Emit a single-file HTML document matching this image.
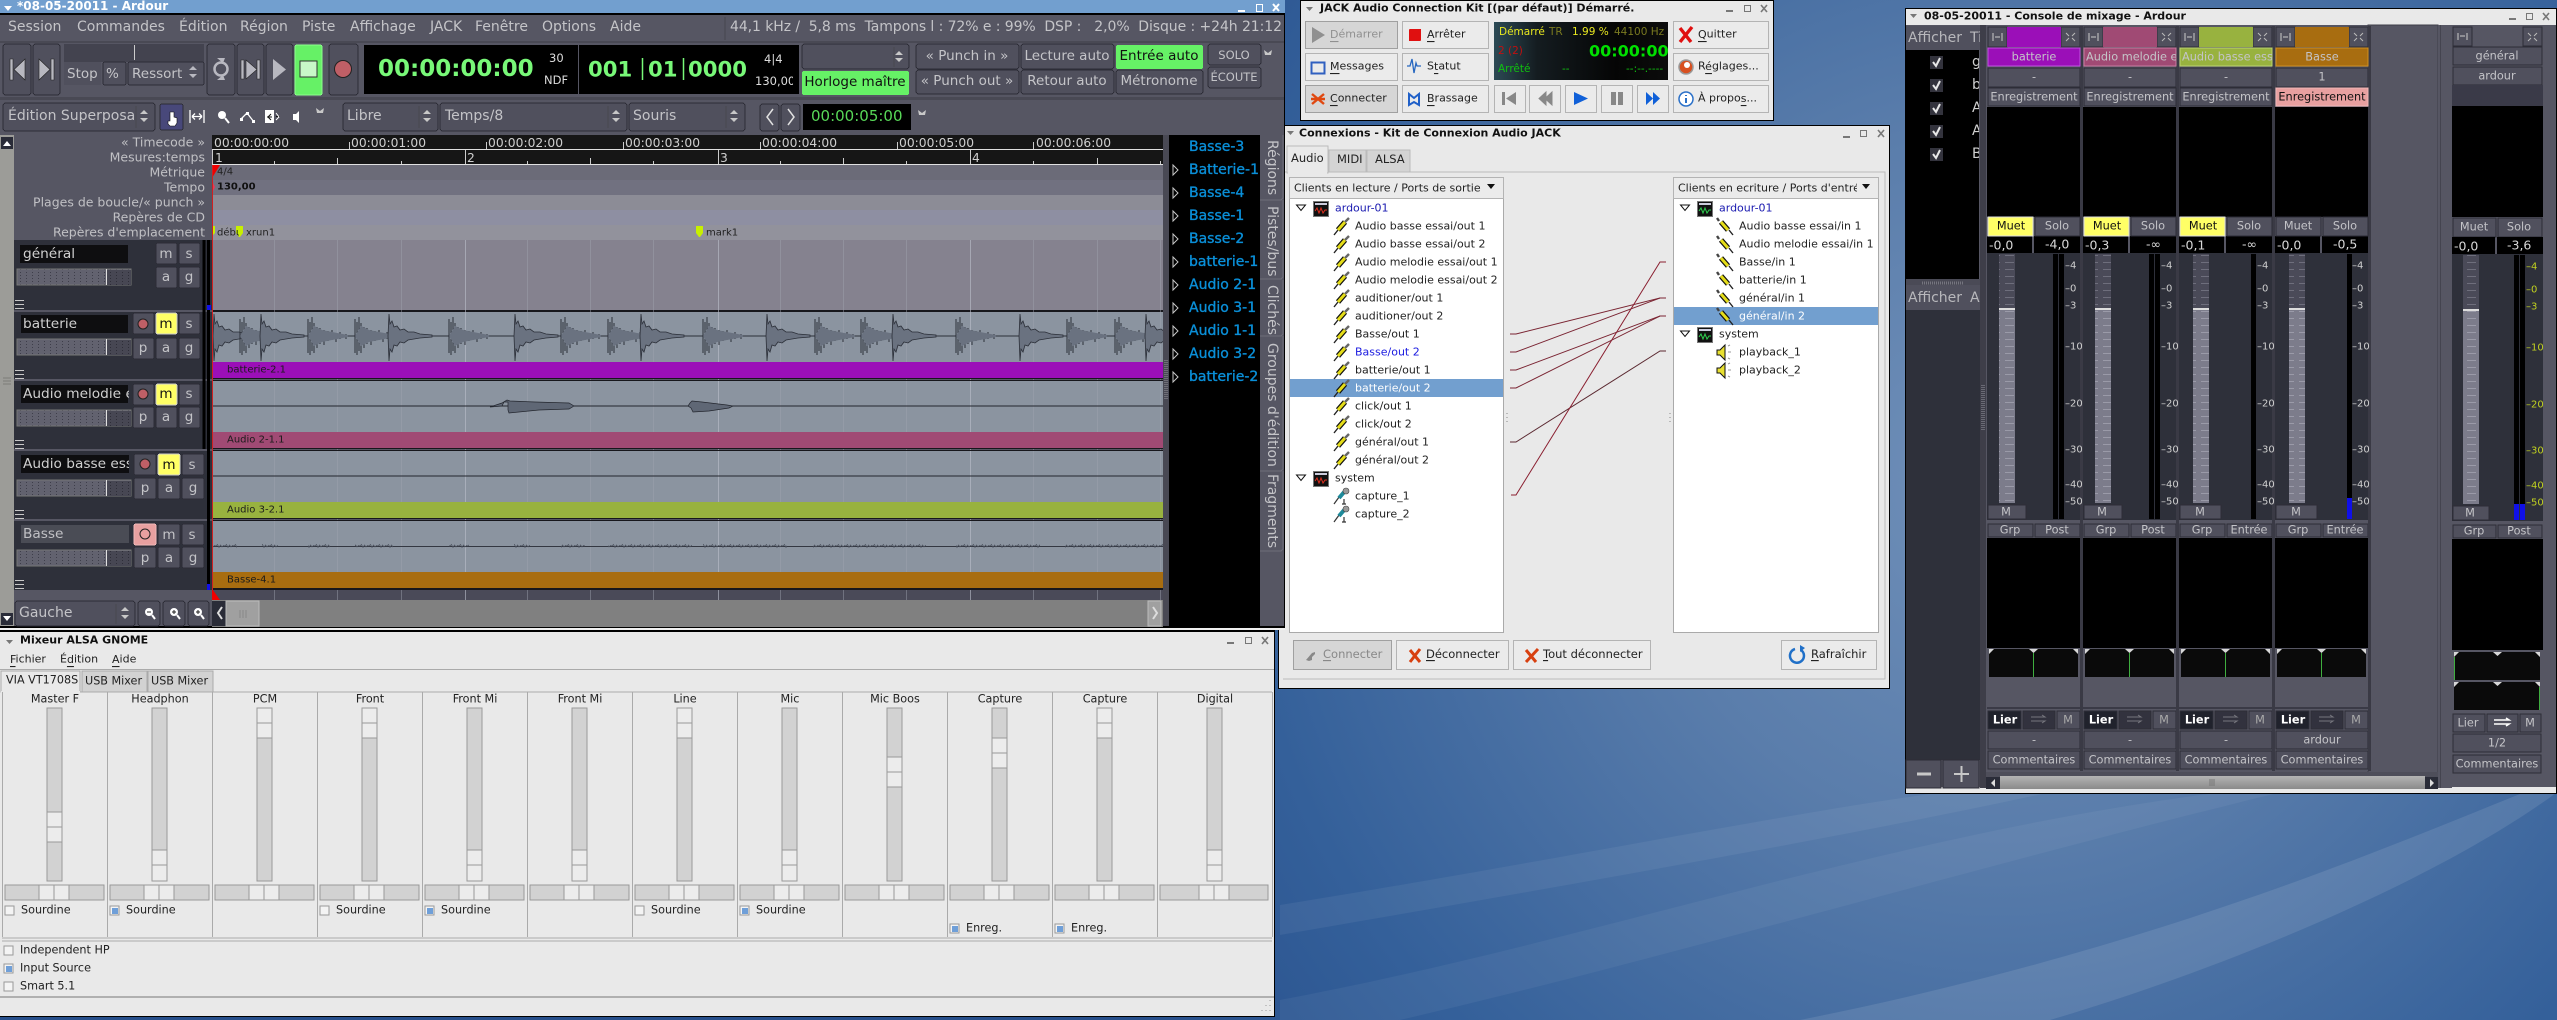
<!DOCTYPE html>
<html><head><meta charset="utf-8"><title>Ardour</title>
<style>
html,body{margin:0;padding:0;width:2557px;height:1020px;overflow:hidden;background:#3a6298}
svg{display:block}
text{font-family:"DejaVu Sans","Liberation Sans",sans-serif;dominant-baseline:central;white-space:pre}
rect{shape-rendering:crispEdges}
.m{text-anchor:middle}.e{text-anchor:end}
.b{fill:#50505d;stroke:#2d2d37}
.k{fill:#ebebeb;stroke:#b4b4b4}
.p{fill:#d6d6d6;stroke:#a0a0a0}
.tb{font-weight:bold;font-size:11px;fill:#111}
</style></head><body>
<svg xmlns="http://www.w3.org/2000/svg" width="2557" height="1020" viewBox="0 0 2557 1020">
<defs>
<radialGradient id="bg" gradientUnits="userSpaceOnUse" cx="2000" cy="480" r="1020"><stop offset="0" stop-color="#7090b9"/><stop offset=".35" stop-color="#5a7dab"/><stop offset=".75" stop-color="#34609a"/><stop offset="1" stop-color="#28508c"/></radialGradient>
<linearGradient id="thumb" x1="0" y1="0" x2="0" y2="1"><stop offset="0" stop-color="#b4b4b4"/><stop offset="1" stop-color="#8a8a8a"/></linearGradient>
<linearGradient id="lcd" x1="0" y1="0" x2="1" y2="0"><stop offset="0" stop-color="#2c4a55"/><stop offset=".25" stop-color="#141c20"/><stop offset=".7" stop-color="#050505"/><stop offset="1" stop-color="#0c0c0c"/></linearGradient>
<pattern id="dots" width="6" height="6" patternUnits="userSpaceOnUse"><rect width="6" height="6" fill="#62626f"/><rect x="2" y="2" width="1" height="1" fill="#3e3e4a"/><rect x="2" y="5" width="1" height="1" fill="#3e3e4a"/></pattern>
<pattern id="dots2" width="6" height="6" patternUnits="userSpaceOnUse"><rect width="6" height="6" fill="#474753"/><rect x="2" y="2" width="1" height="1" fill="#2e2e38"/><rect x="2" y="5" width="1" height="1" fill="#2e2e38"/></pattern>
<pattern id="fd" width="14" height="7" patternUnits="userSpaceOnUse"><rect width="14" height="7" fill="#4a4a58"/><rect x="3" y="3" width="9" height="1" fill="#6e6e7c"/></pattern>
<pattern id="fl" width="14" height="7" patternUnits="userSpaceOnUse"><rect width="14" height="7" fill="#7c7c8b"/><rect x="3" y="3" width="9" height="1" fill="#9a9aa8"/></pattern>
<pattern id="zig" x="0" y="543" width="9" height="6" patternUnits="userSpaceOnUse"><path d="M0,3L1.500,1.500L3,4.500L4.500,2L6,4L7.500,2.500L9,3" fill="none" stroke="#4a505c" stroke-width=".7"/></pattern>

<g id="kick"><path d="M0,0L1,-22L2,-12L4,-15L6,-9L9,-10L12,-6L16,-7L20,-4L26,-4L32,-2L44,-1L44,1L32,2L26,3L20,4L16,7L12,6L9,10L6,9L4,16L2,13L1,25Z" fill="#6a7280" stroke="#2b2f38" stroke-width=".8"/></g>
<g id="snare"><path d="M0,-17V17M2,-14V19M4,-19V15M6,-13V17M9,-9V12M12,-8V8M16,-6V9M20,-5V5M24,-6V4M28,-3V6M32,-4V3M38,-2V3" stroke="#2b2f38" stroke-width="1" fill="none"/><path d="M0,0L6,-10L14,-6L24,-4L40,-1L40,1L24,4L14,6L6,10Z" fill="#6a7280"/></g>

<g id="grip"><path d="M0,.5h9M0,4.5h9M0,8.5h9" stroke="#c8c8c8" fill="none"/></g>

<g id="pl"><path d="M0,17L4,12" stroke="#222" stroke-width="1.400"/><path d="M4,12L11,4" stroke="#111" stroke-width="5.500"/><path d="M4,12L11,4" stroke="#e4dc18" stroke-width="3"/><path d="M11,4L15,0" stroke="#666" stroke-width="2.400"/></g>
<g id="pr"><path d="M16,17L12,12" stroke="#222" stroke-width="1.400"/><path d="M11,12L4,4" stroke="#111" stroke-width="5.500"/><path d="M11,12L4,4" stroke="#e4dc18" stroke-width="3"/><path d="M2,3L0,0" stroke="#444" stroke-width="2.400"/></g>
<g id="mic"><path d="M0,16L8,5" stroke="#333" stroke-width="1.200"/><path d="M5,10L11,3" stroke="#1e8a9a" stroke-width="4"/><circle cx="12" cy="3" r="3" fill="#9a9a9a" stroke="#444" stroke-width=".6"/><path d="M10,11v5M8,16h4" stroke="#333" stroke-width="1.200"/></g>
<g id="spk"><path d="M0,6h3l5,-5v15l-5,-5h-3z" fill="#e8e030" stroke="#111"/><path d="M11,2l2,-1M11,8h3M11,14l2,1" stroke="#999" fill="none"/></g>
<g id="tr"><rect x=".5" y=".5" width="15" height="15" fill="#111" stroke="#777"/><rect x="2" y="2" width="12" height="2" fill="#ccd"/><path d="M2,10l2,-3l2,5l2,-5l2,5l2,-3h2" stroke="#e03020" fill="none"/></g>
<g id="tg"><rect x=".5" y=".5" width="15" height="15" fill="#111" stroke="#777"/><rect x="2" y="2" width="12" height="2" fill="#ccd"/><path d="M2,10l2,-3l2,5l2,-5l2,5l2,-3h2" stroke="#30d050" fill="none"/></g>
<path id="tri" d="M0,0h9l-4.500,5.500z" fill="#fff" stroke="#111"/>

<g id="strip">
<rect x="1987" y="26" width="93" height="745" fill="#565663"/>
<rect x="1987" y="253" width="93" height="267" fill="#2e303a"/>
<rect class="b" x="1988" y="27" width="19" height="20"/><rect class="b" x="2061" y="27" width="19" height="20"/>
<path d="M1993,33v8M2002,33v8M1995,37h5" stroke="#ccc" fill="none"/><path d="M2066,33l3,3M2075,33l-3,3M2066,41l3,-3M2075,41l-3,-3" stroke="#bbb" fill="none"/>
<rect class="b" x="1988" y="68" width="92" height="19"/>
<rect x="1987" y="107" width="93" height="110" fill="#000"/>
<rect class="b" x="1988" y="524" width="45" height="13"/><rect class="b" x="2035" y="524" width="45" height="13"/>
<rect x="1987" y="538" width="93" height="110" fill="#000"/>
<rect x="1989" y="649" width="89" height="28" fill="#0a0a0a"/>
<path d="M1989,649h5l-5,5zM2078,649h-5l5,5zM2029,649h9l-4.500,4z" fill="#d8d8d8"/>
<path d="M2033.500,653V677" stroke="#3fae3f"/>
<rect x="1987" y="707" width="93" height="2" fill="#3a3a46"/>
<rect x="1988" y="711" width="33" height="18" fill="#20222c" stroke="#2d2d37"/><rect x="2023" y="711" width="32" height="18" fill="#32323e" stroke="#2d2d37"/><rect class="b" x="2057" y="711" width="23" height="18"/>
<path d="M2031,717h14l-3,-2M2031,721h14l-3,2" stroke="#77777f" fill="none"/>
<rect class="b" x="1988" y="731" width="92" height="18"/>
<rect class="b" x="1988" y="751" width="92" height="18"/>
<rect x="2080" y="26" width="3" height="745" fill="#3a3a45"/>
<rect x="1987" y="236" width="45" height="17" fill="#000"/><rect x="2034" y="236" width="46" height="17" fill="#000"/>
</g>
</defs>

<!-- desktop -->
<rect width="2557" height="1020" fill="url(#bg)"/>
<path d="M1280,905C1560,860 1800,810 1960,790L2060,790C1880,830 1600,880 1280,935Z" fill="#fff" opacity=".06"/>
<path d="M1280,1000C1600,940 1900,830 2240,790L2290,790C2000,860 1660,960 1400,1020H1280Z" fill="#fff" opacity=".05"/>
<path d="M1800,1020C2150,950 2380,850 2530,790H2560C2440,880 2220,970 2050,1020Z" fill="#fff" opacity=".1"/>

<!-- Connexions window -->
<rect x="1278.500" y="125.500" width="611" height="563" fill="#e9e9e9" stroke="#000"/>
<path d="M1287,131h7l-3.500,4z" fill="#777"/>
<text class="tb" x="1299" y="133">Connexions - Kit de Connexion Audio JACK</text>
<g stroke="#777" fill="none"><path d="M1843,137h7" stroke-width="2"/><rect x="1860.500" y="130.500" width="6" height="6"/><path d="M1878,130l6,7M1884,130l-6,7" stroke-width="1.600"/></g>
<path d="M1283,172H1885V679H1283" fill="none" stroke="#bbb"/>
<rect x="1329" y="150" width="37" height="22" fill="#d4d4d4" stroke="#bbb"/><rect x="1367" y="150" width="43" height="22" fill="#d4d4d4" stroke="#bbb"/>
<rect x="1287" y="146" width="41" height="27" fill="#e9e9e9" stroke="#bbb"/><rect x="1288" y="171" width="39" height="3" fill="#e9e9e9"/>
<g font-size="11.500" fill="#222"><text x="1291" y="158">Audio</text><text x="1337" y="159">MIDI</text><text x="1375" y="159">ALSA</text></g>
<rect x="1289.500" y="198.500" width="214" height="434" fill="#fff" stroke="#aaa"/>
<rect x="1673.500" y="198.500" width="205" height="434" fill="#fff" stroke="#aaa"/>
<rect class="k" x="1289.500" y="177.500" width="214" height="21"/><rect class="k" x="1673.500" y="177.500" width="205" height="21"/>
<path d="M1487,184h8l-4,5zM1862,184h8l-4,5z" fill="#111"/>
<g font-size="11" fill="#222">
<text x="1294" y="188">Clients en lecture / Ports de sortie</text>
<svg x="1677" y="177" width="180" height="22" overflow="hidden"><text x="1" y="11">Clients en ecriture / Ports d'entrée</text></svg>
</g>
<rect x="1290" y="379" width="213" height="18" fill="#729fcf"/>
<rect x="1674" y="307" width="204" height="18" fill="#729fcf"/>
<g font-size="11" fill="#222">
<use href="#tri" x="1296.500" y="205"/><use href="#tr" x="1313" y="201"/><text x="1335" y="208" fill="#1a1ab0">ardour-01</text>
<text x="1355" y="226">Audio basse essai/out 1</text>
<text x="1355" y="244">Audio basse essai/out 2</text>
<text x="1355" y="262">Audio melodie essai/out 1</text>
<text x="1355" y="280">Audio melodie essai/out 2</text>
<text x="1355" y="298">auditioner/out 1</text>
<text x="1355" y="316">auditioner/out 2</text>
<text x="1355" y="334">Basse/out 1</text>
<text x="1355" y="352" fill="#1a1ae0">Basse/out 2</text>
<text x="1355" y="370">batterie/out 1</text>
<text x="1355" y="388" fill="#fff">batterie/out 2</text>
<text x="1355" y="406">click/out 1</text>
<text x="1355" y="424">click/out 2</text>
<text x="1355" y="442">général/out 1</text>
<text x="1355" y="460">général/out 2</text>
<use href="#tri" x="1296.500" y="475"/><use href="#tr" x="1313" y="471"/><text x="1335" y="478">system</text>
<text x="1355" y="496">capture_1</text>
<text x="1355" y="514">capture_2</text>
<use href="#tri" x="1680.500" y="205"/><use href="#tg" x="1697" y="201"/><text x="1719" y="208" fill="#1a1ab0">ardour-01</text>
<text x="1739" y="226">Audio basse essai/in 1</text>
<text x="1739" y="244">Audio melodie essai/in 1</text>
<text x="1739" y="262">Basse/in 1</text>
<text x="1739" y="280">batterie/in 1</text>
<text x="1739" y="298">général/in 1</text>
<text x="1739" y="316" fill="#fff">général/in 2</text>
<use href="#tri" x="1680.500" y="331"/><use href="#tg" x="1697" y="327"/><text x="1719" y="334">system</text>
<text x="1739" y="352">playback_1</text>
<text x="1739" y="370">playback_2</text>
</g>
<use href="#pl" x="1334" y="218"/><use href="#pl" x="1334" y="236"/><use href="#pl" x="1334" y="254"/><use href="#pl" x="1334" y="272"/><use href="#pl" x="1334" y="290"/><use href="#pl" x="1334" y="308"/><use href="#pl" x="1334" y="326"/><use href="#pl" x="1334" y="344"/><use href="#pl" x="1334" y="362"/><use href="#pl" x="1334" y="380"/><use href="#pl" x="1334" y="398"/><use href="#pl" x="1334" y="416"/><use href="#pl" x="1334" y="434"/><use href="#pl" x="1334" y="452"/>
<use href="#mic" x="1334" y="488"/><use href="#mic" x="1334" y="506"/>
<use href="#pr" x="1717" y="218"/><use href="#pr" x="1717" y="236"/><use href="#pr" x="1717" y="254"/><use href="#pr" x="1717" y="272"/><use href="#pr" x="1717" y="290"/><use href="#pr" x="1717" y="308"/>
<use href="#spk" x="1717" y="344"/><use href="#spk" x="1717" y="362"/>
<g fill="none" stroke="#7a2432" stroke-width="1">
<path d="M1510,334h6L1660,298h6"/><path d="M1510,352h6L1660,298h6"/><path d="M1510,370h6L1660,316h6"/><path d="M1510,388h6L1660,316h6"/>
<path d="M1510,442h6L1660,351h6" stroke="#5a2830"/><path d="M1511,495h5L1660,262h6" stroke="#8a1f30"/>
</g>
<path d="M1507,413v1M1507,417v1M1507,421v1M1670,413v1M1670,417v1M1670,421v1" stroke="#888" fill="none"/>
<rect class="p" x="1293.500" y="640.500" width="98" height="29"/><rect class="k" x="1396.500" y="640.500" width="112" height="29"/><rect class="k" x="1513.500" y="640.500" width="137" height="29"/><rect class="k" x="1781.500" y="640.500" width="95" height="29"/>
<g font-size="11.500" fill="#222">
<path d="M1306,660l6,-7l3,-1v2l-3,3v3l-3,1z" fill="#888"/>
<text x="1323" y="654" fill="#888"><tspan text-decoration="underline">C</tspan>onnecter</text>
<path d="M1410,650l10,12M1420,649l-10,13" stroke="#d84010" stroke-width="3"/>
<text x="1426" y="654"><tspan text-decoration="underline">D</tspan>éconnecter</text>
<path d="M1526,650l10,12M1538,649l-12,13" stroke="#d84010" stroke-width="3"/>
<text x="1543" y="654"><tspan text-decoration="underline">T</tspan>out déconnecter</text>
<path d="M1795,649a7,7 0 1 0 6,1" stroke="#2070c8" stroke-width="2.500" fill="none"/><path d="M1800,645v7l5,-4z" fill="#2070c8"/>
<text x="1811" y="654"><tspan text-decoration="underline">R</tspan>afraîchir</text>
</g>

<!-- JACK window -->
<rect x="1300.500" y=".5" width="473" height="120" fill="#e9e9e9" stroke="#000"/>
<path d="M1306,7h7l-3.500,4z" fill="#777"/>
<text class="tb" x="1320" y="8">JACK Audio Connection Kit [(par défaut)] Démarré.</text>
<g stroke="#777" fill="none"><path d="M1726,11h7" stroke-width="2"/><rect x="1744.500" y="5.500" width="6" height="6"/><path d="M1761,5l6,7M1767,5l-6,7" stroke-width="1.600"/></g>
<rect class="p" x="1305.500" y="21.500" width="92" height="27"/><rect class="k" x="1402.500" y="21.500" width="86" height="27"/>
<rect class="k" x="1305.500" y="53.500" width="92" height="27"/><rect class="k" x="1402.500" y="53.500" width="86" height="27"/>
<rect class="p" x="1305.500" y="85.500" width="92" height="27"/><rect class="k" x="1402.500" y="85.500" width="86" height="27"/>
<rect class="k" x="1494.500" y="85.500" width="31" height="27"/><rect class="k" x="1529.500" y="85.500" width="31" height="27"/><rect class="k" x="1565.500" y="85.500" width="31" height="27"/><rect class="k" x="1601.500" y="85.500" width="31" height="27"/><rect class="k" x="1637.500" y="85.500" width="31" height="27"/>
<rect class="k" x="1673.500" y="21.500" width="95" height="27"/><rect class="k" x="1673.500" y="53.500" width="95" height="27"/><rect class="k" x="1673.500" y="85.500" width="95" height="27"/>
<path d="M1312,27l13,8l-13,8z" fill="#909090"/>
<rect x="1409" y="29" width="12" height="12" rx="1" fill="#e01010"/>
<rect x="1311.500" y="62.500" width="13" height="11" fill="none" stroke="#3060c0" stroke-width="2"/>
<path d="M1407,66h3l2,-7l2,14l2,-10l1,3h4" fill="none" stroke="#2868c0" stroke-width="1.300"/>
<path d="M1312,94l12,10M1324,94l-12,10M1311,99h14" stroke="#e04810" stroke-width="2.400" fill="none"/>
<path d="M1409,94v11l5,-3l5,3v-11l-5,4z" fill="none" stroke="#2060c8" stroke-width="2"/>
<path d="M1680,28l11,14M1692,27l-12,15" stroke="#e01010" stroke-width="3.400"/>
<circle cx="1686" cy="67" r="7" fill="#d85020" stroke="#999" stroke-width="1.500"/><circle cx="1687" cy="65" r="3" fill="#fff"/>
<circle cx="1686" cy="99" r="7" fill="#fff" stroke="#2a70c8" stroke-width="1.500"/><path d="M1686,95v1M1686,98v5" stroke="#2a70c8" stroke-width="2"/>
<path d="M1502,92h3v13h-3zM1516,92v13l-10,-6.500z" fill="#888"/>
<path d="M1552,92v13l-7,-6.500zM1546,92v13l-7,-6.500z" fill="#888" stroke="#888"/>
<path d="M1574,92l14,6.500l-14,6.500z" fill="#1060d8"/>
<path d="M1611,92h5v13h-5zM1618,92h5v13h-5z" fill="#888"/>
<path d="M1646,92l7,6.500l-7,6.500zM1653,92l7,6.500l-7,6.500z" fill="#1060d8"/>
<g font-size="11" fill="#222">
<text x="1330" y="34" fill="#909090"><tspan text-decoration="underline">D</tspan>émarrer</text>
<text x="1427" y="34"><tspan text-decoration="underline">A</tspan>rrêter</text>
<text x="1330" y="66"><tspan text-decoration="underline">M</tspan>essages</text>
<text x="1427" y="66">S<tspan text-decoration="underline">t</tspan>atut</text>
<text x="1330" y="98"><tspan text-decoration="underline">C</tspan>onnecter</text>
<text x="1427" y="98"><tspan text-decoration="underline">B</tspan>rassage</text>
<text x="1698" y="34"><tspan text-decoration="underline">Q</tspan>uitter</text>
<text x="1698" y="66">R<tspan text-decoration="underline">é</tspan>glages...</text>
<text x="1698" y="98">À propo<tspan text-decoration="underline">s</tspan>...</text>
</g>
<rect x="1494" y="22" width="174" height="58" fill="url(#lcd)"/>
<g font-size="10.500">
<text x="1499" y="32" fill="#e8e820">Démarré</text><text x="1549" y="32" fill="#7a7a20">TR</text><text x="1572" y="32" fill="#e8e820">1.99 %</text><text x="1614" y="32" fill="#7a7a20">44100 Hz</text>
<text x="1498" y="51" fill="#c01010">2 (2)</text>
<text x="1589" y="51" fill="#00e000" font-size="16" font-weight="bold">00:00:00</text>
<text x="1498" y="69" fill="#10c010">Arrêté</text><text x="1562" y="69" fill="#10c010">--</text><text x="1626" y="69" fill="#10c010">--:--.----</text>
</g>

<!-- Mixer window -->
<rect x="1905.500" y="8.500" width="651" height="785" fill="#e9e9e9" stroke="#000"/>
<path d="M1910,14h7l-3.500,4z" fill="#777"/>
<text class="tb" x="1924" y="16">08-05-20011 - Console de mixage - Ardour</text>
<g stroke="#777" fill="none"><path d="M2509,19h7" stroke-width="2"/><rect x="2526.500" y="13.500" width="6" height="6"/><path d="M2543,13l6,7M2549,13l-6,7" stroke-width="1.600"/></g>
<rect x="1906" y="25" width="650" height="762" fill="#565663"/>
<rect x="1906" y="26" width="74" height="24" fill="#50505d"/>
<rect x="1906" y="50" width="73" height="229" fill="#000"/>
<rect x="1906" y="279" width="74" height="6" fill="#4a4a56"/>
<path d="M1922,283h42" stroke="#75757f" stroke-width="3" stroke-dasharray="1 1"/>
<rect x="1906" y="285" width="74" height="25" fill="#50505d"/>
<rect x="1906" y="310" width="74" height="450" fill="#2e303a"/>
<svg x="1906" y="26" width="74" height="24"><text x="2" y="12" font-size="14" fill="#b8b8bc">Afficher</text><text x="64" y="12" font-size="14" fill="#b8b8bc">Ti</text></svg>
<svg x="1906" y="285" width="74" height="25"><text x="2" y="13" font-size="14" fill="#b8b8bc">Afficher</text><text x="64" y="13" font-size="14" fill="#b8b8bc">A</text></svg>
<g fill="#33333d"><rect x="1930" y="56" width="13" height="13"/><rect x="1930" y="79" width="13" height="13"/><rect x="1930" y="102" width="13" height="13"/><rect x="1930" y="125" width="13" height="13"/><rect x="1930" y="148" width="13" height="13"/></g>
<g fill="none" stroke="#e8e8e8" stroke-width="2"><path d="M1933,62l3,4l4,-8"/><path d="M1933,85l3,4l4,-8"/><path d="M1933,108l3,4l4,-8"/><path d="M1933,131l3,4l4,-8"/><path d="M1933,154l3,4l4,-8"/></g>
<svg x="1970" y="50" width="9" height="120"><g font-size="14" fill="#d0d0d0"><text x="2" y="12">g</text><text x="2" y="35">b</text><text x="2" y="58">A</text><text x="2" y="81">A</text><text x="2" y="104">B</text></g></svg>
<rect class="b" x="1906" y="760" width="35" height="28"/><rect class="b" x="1943" y="760" width="36" height="28"/>
<path d="M1917,774h14" stroke="#c8c8c8" stroke-width="3"/><path d="M1954,774h15M1961.500,766v16" stroke="#c8c8c8" stroke-width="2"/>
<rect x="1980" y="25" width="6" height="763" fill="#3e3e49"/>
<path d="M1983,385v45" stroke="#6a6a75" stroke-width="4" stroke-dasharray="1 1"/>
<rect x="2368" y="25" width="70" height="748" fill="#565663" stroke="#3e3e49"/>
<rect x="2438" y="25" width="14" height="763" fill="#565663"/>
<rect x="2440" y="25" width="1" height="763" fill="#44444f"/>

<use href="#strip"/><use href="#strip" x="96"/><use href="#strip" x="192"/><use href="#strip" x="288"/>

<!-- strip colour -->
<rect x="2007" y="27" width="54" height="20" fill="#9b0fb8"/><rect x="2103" y="27" width="54" height="20" fill="#a04a74"/><rect x="2199" y="27" width="54" height="20" fill="#98b23f"/><rect x="2295" y="27" width="54" height="20" fill="#a86d10"/>
<rect x="1988" y="48" width="92" height="18" fill="#9b0fb8" stroke="#c050e0"/><rect x="2084" y="48" width="92" height="18" fill="#a04a74" stroke="#c87aa0"/><rect x="2180" y="48" width="92" height="18" fill="#98b23f" stroke="#bcd470"/><rect x="2276" y="48" width="92" height="18" fill="#a86d10" stroke="#d09020"/>
<rect class="b" x="1988" y="88" width="92" height="18"/><rect class="b" x="2084" y="88" width="92" height="18"/><rect class="b" x="2180" y="88" width="92" height="18"/><rect x="2276" y="88" width="92" height="18" fill="#e8a0a0" stroke="#f0b8b8"/>
<rect x="1988" y="217" width="45" height="19" fill="#ffff66" stroke="#ddd"/><rect class="b" x="2035" y="217" width="45" height="19"/>
<rect x="2084" y="217" width="45" height="19" fill="#ffff66" stroke="#ddd"/><rect class="b" x="2131" y="217" width="45" height="19"/>
<rect x="2180" y="217" width="45" height="19" fill="#ffff66" stroke="#ddd"/><rect class="b" x="2227" y="217" width="45" height="19"/>
<rect class="b" x="2276" y="217" width="45" height="19"/><rect class="b" x="2323" y="217" width="45" height="19"/>
<!-- faders -->
<rect x="1999" y="254" width="16" height="54" fill="url(#fd)"/><rect x="1999" y="308" width="16" height="195" fill="url(#fl)"/><rect x="1999" y="308" width="16" height="2" fill="#ddd"/>
<rect x="2095" y="254" width="16" height="54" fill="url(#fd)"/><rect x="2095" y="308" width="16" height="195" fill="url(#fl)"/><rect x="2095" y="308" width="16" height="2" fill="#ddd"/>
<rect x="2193" y="254" width="16" height="54" fill="url(#fd)"/><rect x="2193" y="308" width="16" height="195" fill="url(#fl)"/><rect x="2193" y="308" width="16" height="2" fill="#ddd"/>
<rect x="2289" y="254" width="16" height="54" fill="url(#fd)"/><rect x="2289" y="308" width="16" height="195" fill="url(#fl)"/><rect x="2289" y="308" width="16" height="2" fill="#ddd"/>
<rect class="b" x="1988" y="505" width="38" height="14"/><rect class="b" x="2084" y="505" width="38" height="14"/><rect class="b" x="2180" y="505" width="41" height="14"/><rect class="b" x="2276" y="505" width="41" height="14"/>
<!-- meters -->
<rect x="2053" y="254" width="5" height="265" fill="#000"/><rect x="2059" y="254" width="5" height="265" fill="#000"/>
<rect x="2149" y="254" width="5" height="265" fill="#000"/><rect x="2155" y="254" width="5" height="265" fill="#000"/>
<rect x="2251" y="254" width="5" height="265" fill="#000"/>
<rect x="2347" y="254" width="5" height="244" fill="#000"/><rect x="2347" y="498" width="5" height="21" fill="#1010e8"/>

<!-- strip texts -->
<g font-size="11.300" fill="#c4c4c8" class="m">
<text x="2034" y="57">batterie</text>
<svg x="2084" y="48" width="92" height="18"><text x="2" y="9" style="text-anchor:start">Audio melodie essai</text></svg>
<svg x="2180" y="48" width="92" height="18"><text x="2" y="9" style="text-anchor:start">Audio basse essai</text></svg>
<text x="2322" y="57">Basse</text>
<text x="2034" y="77">-</text><text x="2130" y="77">-</text><text x="2226" y="77">-</text><text x="2322" y="77">1</text>
<text x="2034" y="97">Enregistrement</text><text x="2130" y="97">Enregistrement</text><text x="2226" y="97">Enregistrement</text><text x="2322" y="97" fill="#111">Enregistrement</text>
<text x="2011" y="226" fill="#111">Muet</text><text x="2057" y="226">Solo</text>
<text x="2107" y="226" fill="#111">Muet</text><text x="2153" y="226">Solo</text>
<text x="2203" y="226" fill="#111">Muet</text><text x="2249" y="226">Solo</text>
<text x="2298" y="226">Muet</text><text x="2345" y="226">Solo</text>
<text x="2006" y="512">M</text><text x="2102" y="512">M</text><text x="2200" y="512">M</text><text x="2296" y="512">M</text>
<text x="2010" y="530">Grp</text><text x="2057" y="530">Post</text>
<text x="2106" y="530">Grp</text><text x="2153" y="530">Post</text>
<text x="2202" y="530">Grp</text><text x="2249" y="530">Entrée</text>
<text x="2298" y="530">Grp</text><text x="2345" y="530">Entrée</text>
<text x="2005" y="720" fill="#fff" font-weight="bold">Lier</text><text x="2101" y="720" fill="#fff" font-weight="bold">Lier</text><text x="2197" y="720" fill="#fff" font-weight="bold">Lier</text><text x="2293" y="720" fill="#fff" font-weight="bold">Lier</text>
<text x="2068" y="720" fill="#aaa">M</text><text x="2164" y="720" fill="#aaa">M</text><text x="2260" y="720" fill="#aaa">M</text><text x="2356" y="720" fill="#aaa">M</text>
<text x="2034" y="740">-</text><text x="2130" y="740">-</text><text x="2226" y="740">-</text><text x="2322" y="740">ardour</text>
<text x="2034" y="760">Commentaires</text><text x="2130" y="760">Commentaires</text><text x="2226" y="760">Commentaires</text><text x="2322" y="760">Commentaires</text>
</g>
<g font-size="12.500" fill="#d8d8d8">
<text x="1989" y="245">-0,0</text><text x="2045" y="244">-4,0</text>
<text x="2085" y="245">-0,3</text><text x="2146" y="244">-∞</text>
<text x="2181" y="245">-0,1</text><text x="2242" y="244">-∞</text>
<text x="2277" y="245">-0,0</text><text x="2333" y="244">-0,5</text>
</g>
<g font-size="10" fill="#cfcfcf">
<text x="2065" y="266">–4</text><text x="2065" y="289">–0</text><text x="2065" y="306">–3</text><text x="2065" y="347">–10</text><text x="2065" y="404">–20</text><text x="2065" y="450">–30</text><text x="2065" y="485">–40</text><text x="2065" y="502">–50</text>
<text x="2161" y="266">–4</text><text x="2161" y="289">–0</text><text x="2161" y="306">–3</text><text x="2161" y="347">–10</text><text x="2161" y="404">–20</text><text x="2161" y="450">–30</text><text x="2161" y="485">–40</text><text x="2161" y="502">–50</text>
<text x="2257" y="266">–4</text><text x="2257" y="289">–0</text><text x="2257" y="306">–3</text><text x="2257" y="347">–10</text><text x="2257" y="404">–20</text><text x="2257" y="450">–30</text><text x="2257" y="485">–40</text><text x="2257" y="502">–50</text>
<text x="2352" y="266">–4</text><text x="2352" y="289">–0</text><text x="2352" y="306">–3</text><text x="2352" y="347">–10</text><text x="2352" y="404">–20</text><text x="2352" y="450">–30</text><text x="2352" y="485">–40</text><text x="2352" y="502">–50</text>
</g>
<!-- master -->
<rect x="2452" y="26" width="91" height="745" fill="#565663"/>
<rect class="b" x="2453" y="27" width="19" height="19"/><rect class="b" x="2523" y="27" width="19" height="19"/>
<path d="M2458,33v7M2467,33v7M2460,36h5" stroke="#ccc" fill="none"/><path d="M2528,33l3,3M2537,33l-3,3M2528,41l3,-3M2537,41l-3,-3" stroke="#bbb" fill="none"/>
<rect class="b" x="2453" y="47" width="89" height="18"/><rect class="b" x="2453" y="67" width="89" height="18"/>
<rect x="2452" y="85" width="91" height="21" fill="#3a3a48"/>
<rect x="2452" y="106" width="91" height="111" fill="#000"/>
<rect class="b" x="2453" y="218" width="43" height="19"/><rect class="b" x="2498" y="218" width="44" height="19"/>
<rect x="2452" y="237" width="43" height="17" fill="#000"/><rect x="2497" y="237" width="46" height="17" fill="#000"/>
<rect x="2452" y="254" width="91" height="267" fill="#2e303a"/>
<rect x="2463" y="255" width="16" height="54" fill="url(#fd)"/><rect x="2463" y="309" width="16" height="195" fill="url(#fl)"/><rect x="2463" y="309" width="16" height="2" fill="#ddd"/>
<rect class="b" x="2453" y="506" width="36" height="14"/>
<rect x="2514" y="255" width="5" height="249" fill="#000"/><rect x="2520" y="255" width="5" height="249" fill="#000"/><rect x="2514" y="504" width="5" height="16" fill="#1010e8"/><rect x="2520" y="504" width="5" height="16" fill="#1010e8"/>
<rect class="b" x="2453" y="525" width="43" height="13"/><rect class="b" x="2498" y="525" width="44" height="13"/>
<rect x="2452" y="539" width="91" height="111" fill="#000"/>
<rect x="2454" y="652" width="86" height="28" fill="#0a0a0a"/><rect x="2454" y="682" width="86" height="28" fill="#0a0a0a"/>
<path d="M2454,652h5l-5,5zM2540,652h-5l5,5zM2493,652h9l-4.500,4zM2454,682h5l-5,5zM2540,682h-5l5,5zM2493,682h9l-4.500,4z" fill="#d8d8d8"/>
<path d="M2454.500,657v23" stroke="#3fae3f"/><path d="M2539.500,687v23" stroke="#3fae3f"/>
<rect class="b" x="2453" y="714" width="32" height="18"/><rect class="b" x="2487" y="714" width="31" height="18"/><rect class="b" x="2520" y="714" width="21" height="18"/>
<path d="M2494,720h15l-3,-2M2494,724h15l-3,2" stroke="#fff" stroke-width="1.600" fill="none"/>
<rect class="b" x="2453" y="734" width="88" height="18"/><rect class="b" x="2453" y="755" width="88" height="18"/>
<g font-size="11.300" fill="#c4c4c8" class="m">
<text x="2497" y="56">général</text><text x="2497" y="76">ardour</text>
<text x="2474" y="227">Muet</text><text x="2519" y="227">Solo</text>
<text x="2470" y="513">M</text>
<text x="2474" y="531">Grp</text><text x="2519" y="531">Post</text>
<text x="2468" y="723">Lier</text><text x="2530" y="723">M</text>
<text x="2497" y="743">1/2</text><text x="2497" y="764">Commentaires</text>
</g>
<g font-size="12.500" fill="#d8d8d8"><text x="2454" y="246">-0,0</text><text x="2507" y="245">-3,6</text></g>
<g font-size="10" fill="#c0d020">
<text x="2526" y="267">–4</text><text x="2526" y="290">–0</text><text x="2526" y="307">–3</text><text x="2526" y="348">–10</text><text x="2526" y="405">–20</text><text x="2526" y="451">–30</text><text x="2526" y="486">–40</text><text x="2526" y="503">–50</text>
</g>
<!-- mixer scroll -->
<rect x="1986" y="772" width="452" height="16" fill="#4e4e5a"/>
<rect x="1986" y="777" width="14" height="12" fill="#2a2c38"/><path d="M1995,779v8l-4,-4z" fill="#ddd"/>
<rect x="2000" y="776" width="425" height="13" fill="url(#thumb)"/><path d="M2210,779v7M2212,779v7M2214,779v7" stroke="#777"/>
<rect x="2425" y="777" width="13" height="12" fill="#2a2c38"/><path d="M2430,779v8l4,-4z" fill="#ddd"/>

<!-- Ardour window -->
<rect x="0" y="0" width="1285" height="630" fill="#000"/>
<rect x="0" y="628" width="1285" height="2" fill="#f0f0f0"/>
<rect x="0" y="0" width="1285" height="13" fill="#729fcf"/>
<path d="M4,6h8l-4,5z" fill="#fff"/>
<text x="17" y="6" font-size="12" font-weight="bold" fill="#fff">*08-05-20011 - Ardour</text>
<g stroke="#fff" fill="none"><path d="M1238,11h7" stroke-width="2"/><rect x="1256.500" y="4.500" width="6" height="7"/><path d="M1273,4l6,7M1279,4l-6,7" stroke-width="2"/></g>
<rect x="0" y="15" width="1284" height="611" fill="#565663"/>
<rect x="0" y="41" width="1284" height="2" fill="#494954"/><rect x="0" y="97" width="1284" height="3" fill="#494954"/>
<path d="M725,17V40" stroke="#47474f"/>
<g font-size="14" fill="#c4c4c8">
<text x="8" y="27">Session</text><text x="77" y="27">Commandes</text><text x="179" y="27">Édition</text><text x="240" y="27">Région</text><text x="302" y="27">Piste</text><text x="350" y="27">Affichage</text><text x="430" y="27">JACK</text><text x="475" y="27">Fenêtre</text><text x="542" y="27">Options</text><text x="610" y="27">Aide</text>
<text x="730" y="27" textLength="552">44,1 kHz /  5,8 ms  Tampons l : 72% e : 99%  DSP :   2,0%  Disque : +24h 21:12</text>
</g>
<!-- transport -->
<rect class="b" x="3" y="44" width="28" height="51" rx="3"/><rect class="b" x="33" y="44" width="27" height="51" rx="3"/>
<path d="M10,59h3v21h-3zM25,59v21l-11,-10.500z" fill="#b8b8c0" stroke="#222" stroke-width=".6"/>
<path d="M39,59l11,10.500l-11,10.500zM51,59h3v21h-3z" fill="#b8b8c0" stroke="#222" stroke-width=".6"/>
<rect x="64" y="44" width="140" height="18" fill="#43434f"/><path d="M134.500,45v15" stroke="#ccc"/>
<rect x="64" y="62" width="37" height="23" fill="#50505d"/><rect class="b" x="103" y="62" width="23" height="23" rx="2"/><rect class="b" x="128" y="62" width="76" height="23" rx="2"/>
<path d="M193,66l-4,4h8zM189,74h8l-4,4z" fill="#b8b8c0"/>
<g font-size="13.500" fill="#c4c4c8"><text x="67" y="74">Stop</text><text x="106" y="74">%</text><text x="132" y="74">Ressort</text></g>
<rect class="b" x="207" y="44" width="28" height="51" rx="3"/><rect class="b" x="237" y="44" width="27" height="51" rx="3"/><rect class="b" x="266" y="44" width="27" height="51" rx="3"/>
<circle cx="221" cy="69" r="6.500" fill="none" stroke="#b8b8c0" stroke-width="2.500"/><path d="M217,58h8l-2,5zM217,80h8l-2,-5z" fill="#b8b8c0"/>
<path d="M241,60h3v19h-3zM246,60l11,9.500l-11,9.500zM257,60h3v19h-3z" fill="#b8b8c0" stroke="#222" stroke-width=".6"/>
<path d="M273,59l13,10.500l-13,10.500z" fill="#b8b8c0"/>
<rect x="295" y="45" width="27" height="50" rx="2" fill="#66f166" stroke="#8cff8c"/><rect x="300" y="61" width="17" height="16" fill="#c8f8c8" stroke="#333"/>
<rect class="b" x="329" y="44" width="29" height="51" rx="3"/><circle cx="343" cy="69" r="8.500" fill="#bf5f66" stroke="#222"/>
<rect x="364" y="45" width="214" height="49" fill="#000"/><rect x="579" y="45" width="220" height="49" fill="#000"/>
<text x="378" y="69" font-size="23" font-weight="bold" fill="#78f878">00:00:00:00</text>
<text x="549" y="58" font-size="11.500" fill="#ddd">30</text><text x="544" y="80" font-size="11.500" fill="#ddd">NDF</text>
<g font-size="21.200" font-weight="bold" fill="#78f878"><text x="588" y="69">001</text><text x="648" y="69">01</text><text x="688" y="69">0000</text></g>
<path d="M642.500,58V80M683.500,58V80" stroke="#78f878" stroke-width="1.500"/>
<text x="764" y="59" font-size="11.500" fill="#ddd">4|4</text>
<svg x="755" y="72" width="38" height="18"><text x="0" y="9" font-size="11.500" fill="#ddd">130,00</text></svg>
<rect class="b" x="802" y="44" width="107" height="25" rx="3"/><path d="M894,47V67" stroke="#47474f"/><path d="M899,51l-4,4h8zM895,58h8l-4,4z" fill="#c8c8c8"/>
<rect x="802" y="71" width="107" height="24" rx="2" fill="#66f166"/>
<rect class="b" x="916" y="44" width="103" height="25" rx="3"/><rect class="b" x="1021" y="44" width="93" height="25" rx="3"/><rect x="1116" y="45" width="87" height="24" rx="2" fill="#66f166"/>
<rect class="b" x="916" y="70" width="103" height="24" rx="3"/><rect class="b" x="1021" y="70" width="93" height="24" rx="3"/><rect class="b" x="1116" y="70" width="87" height="24" rx="3"/>
<rect class="b" x="1208" y="44" width="53" height="21" rx="3"/><rect class="b" x="1208" y="67" width="53" height="21" rx="3"/>
<path d="M1264,50l4,3l4,-3l-1,5h-6z" fill="#c8c8c8"/>
<g font-size="13.500" fill="#c4c4c8" class="m">
<text x="855" y="82" fill="#111">Horloge maître</text>
<text x="967" y="56">« Punch in »</text><text x="1067" y="56">Lecture auto</text><text x="1159" y="56" fill="#111">Entrée auto</text>
<text x="967" y="81">« Punch out »</text><text x="1067" y="81">Retour auto</text><text x="1159" y="81">Métronome</text>
</g>
<g font-size="11.500" fill="#c4c4c8" class="m"><text x="1234" y="55">SOLO</text><text x="1234" y="77">ÉCOUTE</text></g>
<!-- toolbar -->
<rect class="b" x="3" y="103" width="152" height="28" rx="3"/><path d="M136,106V128" stroke="#47474f"/><path d="M144,110l-4,4h8zM140,118h8l-4,4z" fill="#c8c8c8"/>
<text x="8" y="116" font-size="14" fill="#c4c4c8">Édition Superposa</text>
<rect x="160" y="104" width="23" height="26" rx="2" fill="#48487a" stroke="#2d2d37"/>
<path d="M170,112v9h-2v3l2,2h5l2,-3v-5l-3,-1v-5z" fill="#fff" stroke="#111" stroke-width=".6"/>
<path d="M190,110v13M204,110v13M192,116.500h10M192,116.500l3,-3M192,116.500l3,3M202,116.500l-3,-3M202,116.500l-3,3" stroke="#fff" fill="none" stroke-width="1.300"/>
<circle cx="222" cy="115" r="4" fill="#fff"/><path d="M225,118l4,5" stroke="#fff" stroke-width="2"/>
<path d="M241,119l6,-6l7,9" stroke="#fff" fill="none" stroke-width="1.300"/><rect x="240" y="118" width="3" height="3" fill="#fff"/><rect x="246" y="112" width="3" height="3" fill="#fff"/><rect x="252" y="120" width="3" height="3" fill="#fff"/>
<path d="M265,110h9v13h-9z" fill="#fff"/><path d="M267,117h5M276,116.500h4M271,114l-3,3l3,3" stroke="#111" fill="none"/><path d="M276,113l3,4l-3,3" stroke="#fff" fill="none"/>
<path d="M293,114h3l3,-3v12l-3,-3h-3z" fill="#fff"/>
<path d="M316,108l4,3l4,-3l-1,5h-6z" fill="#c8c8c8"/>
<rect class="b" x="343" y="103" width="95" height="28" rx="3"/><path d="M419,106V128" stroke="#47474f"/><path d="M427,110l-4,4h8zM423,118h8l-4,4z" fill="#c8c8c8"/>
<rect class="b" x="440" y="103" width="187" height="28" rx="3"/><path d="M608,106V128" stroke="#47474f"/><path d="M616,110l-4,4h8zM612,118h8l-4,4z" fill="#c8c8c8"/>
<rect class="b" x="629" y="103" width="116" height="28" rx="3"/><path d="M726,106V128" stroke="#47474f"/><path d="M734,110l-4,4h8zM730,118h8l-4,4z" fill="#c8c8c8"/>
<g font-size="14" fill="#c4c4c8"><text x="347" y="116">Libre</text><text x="445" y="116">Temps/8</text><text x="633" y="116">Souris</text></g>
<rect class="b" x="760" y="104" width="19" height="27" rx="3"/><rect class="b" x="781" y="104" width="19" height="27" rx="3"/>
<path d="M773,109l-6,8l6,8M788,109l6,8l-6,8" fill="none" stroke="#e0e0e0" stroke-width="1.500"/>
<rect x="803" y="104" width="108" height="26" fill="#000"/>
<text x="811" y="116" font-size="15" fill="#58d858">00:00:05:00</text>
<path d="M918,110l4,3l4,-3l-1,5h-6z" fill="#c8c8c8"/>
<!-- editor left -->
<rect x="0" y="135" width="14" height="491" fill="#9c9c98"/>
<rect x="1" y="137" width="12" height="12" fill="#2a2c38"/><path d="M3,146h8l-4,-5z" fill="#fff"/>
<rect x="1" y="613" width="12" height="12" fill="#2a2c38"/><path d="M3,616h8l-4,5z" fill="#fff"/>
<path d="M3,378h8M3,381h8M3,384h8" stroke="#7c7c78"/>
<g font-size="12.500" fill="#c0c0c4" class="e">
<text x="205" y="142">« Timecode »</text><text x="205" y="157">Mesures:temps</text><text x="205" y="172">Métrique</text><text x="205" y="187">Tempo</text><text x="205" y="202">Plages de boucle/« punch »</text><text x="205" y="217">Repères de CD</text><text x="205" y="232">Repères d'emplacement</text>
</g>
<!-- rulers -->
<rect x="212" y="135" width="951" height="14" fill="#161616"/><rect x="212" y="149" width="951" height="1" fill="#e0e0e0"/>
<rect x="212" y="150" width="951" height="14" fill="#161616"/><rect x="212" y="164" width="951" height="1" fill="#e0e0e0"/>
<rect x="212" y="165" width="951" height="15" fill="#6b6b78"/><rect x="212" y="180" width="951" height="15" fill="#717180"/><rect x="212" y="195" width="951" height="15" fill="#8c8c96"/><rect x="212" y="210" width="951" height="15" fill="#8e8fa2"/><rect x="212" y="225" width="951" height="15" fill="#92929c"/>
<path d="M349.500,142v7M486.500,142v7M623.500,142v7M760.500,142v7M897.500,142v7M1033.500,142v7M465.500,150v14M718.500,150v14M970.500,150v14M212.500,150v14M274.500,161v3M337.500,158v6M401.500,161v3M527.500,161v3M590.500,158v6M653.500,161v3M780.500,161v3M843.500,158v6M906.500,161v3M1033.500,161v3M1097.500,158v6M1160.500,161v3" stroke="#ccc" fill="none"/>
<g font-size="12.300" fill="#cfcfcf">
<text x="214" y="143">00:00:00:00</text><text x="351" y="143">00:00:01:00</text><text x="488" y="143">00:00:02:00</text><text x="625" y="143">00:00:03:00</text><text x="762" y="143">00:00:04:00</text><text x="899" y="143">00:00:05:00</text><text x="1036" y="143">00:00:06:00</text>
<text x="215" y="158">1</text><text x="467" y="158">2</text><text x="720" y="158">3</text><text x="972" y="158">4</text>
</g>
<path d="M212,165h8l-8,13z" fill="#f00000"/><path d="M212,181l3,6l-3,6z" fill="#e83a5a"/>
<path d="M212,226h3v7l-3,3zM236,226h7v7l-3,4h-1l-3,-4zM696,226h7v7l-3,4h-1l-3,-4z" fill="#c8f000"/>
<g font-size="10" fill="#222"><text x="217" y="172">4/4</text><text x="217" y="187" font-weight="bold" fill="#111">130,00</text>
<svg x="217" y="226" width="22" height="14"><text x="0" y="7">début</text></svg>
<text x="246" y="233">xrun1</text><text x="706" y="233">mark1</text></g>
<!-- tracks -->
<rect x="212" y="240" width="951" height="70" fill="#85828f"/>
<rect x="212" y="310" width="951" height="2" fill="#17171c"/>
<rect x="212" y="312" width="951" height="50" fill="#8b94a0"/>
<rect x="212" y="381" width="951" height="51" fill="#8b94a0"/>
<rect x="212" y="451" width="951" height="51" fill="#8b94a0"/>
<rect x="212" y="521" width="951" height="51" fill="#8b94a0"/>
<rect x="212" y="590" width="951" height="10" fill="#4a4a58"/>
<path d="M274.500,240V600M337.500,240V600M401.500,240V600M527.500,240V600M590.500,240V600M653.500,240V600M780.500,240V600M843.500,240V600M906.500,240V600M1033.500,240V600M1097.500,240V600M1160.500,240V600" stroke="#a0a4b0" stroke-opacity=".45" fill="none"/>
<path d="M465.500,240V600M718.500,240V600M970.500,240V600" stroke="#bcc0cc" stroke-opacity=".6" fill="none"/>
<!-- waveforms -->
<path d="M212,336H1163" stroke="#2b2f38"/>
<use href="#kick" x="213" y="336"/><use href="#snare" x="240" y="336"/>
<use href="#kick" x="260" y="336"/><use href="#snare" x="308" y="336"/><use href="#snare" x="355" y="336"/><use href="#kick" x="388" y="336"/><use href="#snare" x="449" y="336"/><use href="#kick" x="514" y="336"/><use href="#snare" x="561" y="336"/><use href="#snare" x="608" y="336"/><use href="#kick" x="640" y="336"/><use href="#snare" x="703" y="336"/><use href="#kick" x="766" y="336"/><use href="#snare" x="815" y="336"/><use href="#snare" x="861" y="336"/><use href="#kick" x="892" y="336"/><use href="#snare" x="956" y="336"/><use href="#kick" x="1019" y="336"/><use href="#snare" x="1067" y="336"/><use href="#snare" x="1115" y="336"/>
<svg x="1140" y="312" width="23" height="50"><use href="#kick" x="5" y="24"/></svg>
<path d="M212,406H1163M212,476H1163" stroke="#23262e"/>
<path d="M490,406l12,-1l2,-4l4,0v8l1,3l30,-3l30,-1l5,-3l-5,-3l-34,-1l-25,-1l-3,-1l-5,3z" fill="#5f6775" stroke="#23262e" stroke-width=".7" transform="translate(0,1)"/>
<path d="M688,406l2,-3l2,-2l10,1l25,3l6,1l-4,2l-20,3l-16,1l-2,-4z" fill="#5f6775" stroke="#23262e" stroke-width=".7"/>
<path d="M212,546.500H1163" stroke="#343842"/>
<g fill="url(#zig)"><rect x="212" y="543" width="25" height="6"/><rect x="262" y="543" width="16" height="6"/><rect x="308" y="543" width="22" height="6"/><rect x="355" y="543" width="38" height="6"/><rect x="449" y="543" width="20" height="6"/><rect x="514" y="543" width="16" height="6"/><rect x="561" y="543" width="24" height="6"/><rect x="608" y="543" width="84" height="6"/><rect x="703" y="543" width="84" height="6"/><rect x="813" y="543" width="113" height="6"/><rect x="956" y="543" width="84" height="6"/><rect x="1065" y="543" width="98" height="6"/></g>
<rect x="212" y="362" width="951" height="16" fill="#9b0fb8"/><rect x="212" y="432" width="951" height="16" fill="#a04a74"/><rect x="212" y="502" width="951" height="16" fill="#98b23f"/><rect x="212" y="572" width="951" height="16" fill="#a86d10"/>
<g fill="#17171c"><rect x="212" y="378" width="951" height="1"/><rect x="212" y="380" width="951" height="1"/><rect x="212" y="448" width="951" height="1"/><rect x="212" y="450" width="951" height="1"/><rect x="212" y="518" width="951" height="1"/><rect x="212" y="520" width="951" height="1"/><rect x="212" y="588" width="951" height="2"/></g>
<g font-size="10" fill="#1c1c1c"><text x="227" y="370">batterie-2.1</text><text x="227" y="440">Audio 2-1.1</text><text x="227" y="510">Audio 3-2.1</text><text x="227" y="580">Basse-4.1</text></g>
<rect x="212" y="165" width="1" height="425" fill="#d02020"/>
<path d="M211,590h2l7,10h-9z" fill="#f00000"/>
<!-- track headers -->
<rect x="14" y="240" width="198" height="350" fill="#2e303a"/>
<rect x="14" y="310" width="198" height="2" fill="#565663"/><rect x="14" y="379" width="198" height="2" fill="#565663"/><rect x="14" y="449" width="198" height="2" fill="#565663"/><rect x="14" y="519" width="198" height="2" fill="#565663"/>
<path d="M204,240V449" stroke="#000" stroke-width="3"/><path d="M208.500,240V590" stroke="#000" stroke-width="3"/>
<rect x="207" y="305" width="4" height="5" fill="#1010e8"/><rect x="207" y="584" width="3" height="6" fill="#1010e8"/>
<rect x="20" y="245" width="108" height="18" fill="#0e0e10"/><rect x="21" y="315" width="107" height="18" fill="#0e0e10"/><rect x="21" y="385" width="107" height="18" fill="#0e0e10"/><rect x="21" y="455" width="108" height="18" fill="#0e0e10"/><rect x="21" y="525" width="108" height="18" fill="#4a4c55"/>
<svg x="21" y="240" width="108" height="320"><g font-size="13.700" fill="#d0d0d0"><text x="2" y="14">général</text><text x="2" y="84">batterie</text><text x="2" y="154">Audio melodie essai</text><text x="2" y="224">Audio basse essai</text><text x="2" y="294" fill="#c0c0c4">Basse</text></g></svg>
<g>
<rect x="17" y="269" width="114" height="16" fill="url(#dots)" stroke="#777"/><rect x="17" y="339" width="114" height="16" fill="url(#dots)" stroke="#777"/><rect x="17" y="410" width="114" height="16" fill="url(#dots)" stroke="#777"/><rect x="17" y="480" width="114" height="16" fill="url(#dots)" stroke="#777"/><rect x="17" y="550" width="114" height="16" fill="url(#dots)" stroke="#777"/>
<rect x="107" y="270" width="24" height="15" fill="url(#dots2)"/><rect x="107" y="340" width="24" height="15" fill="url(#dots2)"/><rect x="107" y="411" width="24" height="15" fill="url(#dots2)"/><rect x="107" y="481" width="24" height="15" fill="url(#dots2)"/><rect x="107" y="551" width="24" height="15" fill="url(#dots2)"/>
<path d="M106.500,269v16M106.500,339v16M106.500,410v16M106.500,480v16M106.500,550v16" stroke="#e0e0e0"/>
</g>
<use href="#grip" x="15" y="300"/><use href="#grip" x="15" y="370"/><use href="#grip" x="15" y="440"/><use href="#grip" x="15" y="510"/><use href="#grip" x="15" y="580"/>
<g>
<rect class="b" x="156" y="243" width="21" height="21" rx="2"/><rect class="b" x="179" y="243" width="21" height="21" rx="2"/><rect class="b" x="156" y="267" width="21" height="21" rx="2"/><rect class="b" x="179" y="267" width="21" height="21" rx="2"/>
<rect class="b" x="133" y="313" width="21" height="21" rx="2"/><rect x="156" y="313" width="21" height="21" rx="2" fill="#ffff66" stroke="#ccc"/><rect class="b" x="179" y="313" width="21" height="21" rx="2"/><rect class="b" x="133" y="338" width="21" height="21" rx="2"/><rect class="b" x="156" y="338" width="21" height="21" rx="2"/><rect class="b" x="179" y="338" width="21" height="21" rx="2"/>
<rect class="b" x="133" y="384" width="21" height="21" rx="2"/><rect x="156" y="384" width="21" height="21" rx="2" fill="#ffff66" stroke="#ccc"/><rect class="b" x="179" y="384" width="21" height="21" rx="2"/><rect class="b" x="133" y="407" width="21" height="21" rx="2"/><rect class="b" x="156" y="407" width="21" height="21" rx="2"/><rect class="b" x="179" y="407" width="21" height="21" rx="2"/>
<rect class="b" x="134" y="454" width="22" height="21" rx="2"/><rect x="158" y="454" width="22" height="21" rx="2" fill="#ffff66" stroke="#ccc"/><rect class="b" x="182" y="454" width="22" height="21" rx="2"/><rect class="b" x="134" y="478" width="22" height="21" rx="2"/><rect class="b" x="158" y="478" width="22" height="21" rx="2"/><rect class="b" x="182" y="478" width="22" height="21" rx="2"/>
<rect x="134" y="524" width="22" height="21" rx="2" fill="#e8a0a0" stroke="#f0b8b8"/><rect class="b" x="158" y="524" width="22" height="21" rx="2"/><rect class="b" x="182" y="524" width="22" height="21" rx="2"/><rect class="b" x="134" y="547" width="22" height="21" rx="2"/><rect class="b" x="158" y="547" width="22" height="21" rx="2"/><rect class="b" x="182" y="547" width="22" height="21" rx="2"/>
</g>
<g fill="#bf5f66" stroke="#222"><circle cx="143" cy="324" r="5"/><circle cx="143" cy="394" r="5"/><circle cx="145" cy="464" r="5"/><circle cx="145" cy="534" r="5" fill="#e8a0a0"/></g>
<g font-size="13.500" fill="#c4c4c8" class="m">
<text x="166" y="254">m</text><text x="189" y="254">s</text><text x="166" y="277">a</text><text x="189" y="277">g</text>
<text x="166" y="324" fill="#111">m</text><text x="189" y="324">s</text><text x="143" y="348">p</text><text x="166" y="348">a</text><text x="189" y="348">g</text>
<text x="166" y="394" fill="#111">m</text><text x="189" y="394">s</text><text x="143" y="417">p</text><text x="166" y="417">a</text><text x="189" y="417">g</text>
<text x="169" y="465" fill="#111">m</text><text x="192" y="465">s</text><text x="145" y="488">p</text><text x="169" y="488">a</text><text x="193" y="488">g</text>
<text x="169" y="535">m</text><text x="192" y="535">s</text><text x="145" y="558">p</text><text x="169" y="558">a</text><text x="193" y="558">g</text>
</g>
<!-- bottom of editor -->
<rect x="14" y="590" width="198" height="10" fill="#565663"/>
<rect class="b" x="15" y="601" width="120" height="25" rx="3"/><path d="M116,604V624" stroke="#47474f"/><path d="M125,607l-4,4h8zM121,615h8l-4,4z" fill="#c8c8c8"/>
<text x="19" y="613" font-size="14" fill="#c4c4c8">Gauche</text>
<rect class="b" x="138" y="601" width="22" height="25" rx="3"/><rect class="b" x="163" y="601" width="22" height="25" rx="3"/><rect class="b" x="188" y="601" width="21" height="25" rx="3"/>
<g stroke="#fff" fill="#fff"><circle cx="149" cy="612" r="3.500"/><path d="M152,615l3,4" stroke-width="2"/><circle cx="174" cy="612" r="3.500"/><path d="M177,615l3,4" stroke-width="2"/><circle cx="198" cy="612" r="3.500"/><path d="M201,615l3,4" stroke-width="2"/></g>
<path d="M147,612h4M172,612h4M174,610v4M196,612h4M198,610v4" stroke="#222"/>
<rect x="212" y="600" width="951" height="27" fill="#808080"/>
<rect x="212" y="601" width="14" height="25" fill="#2a2c38"/><path d="M222,607l-4,6l4,6" stroke="#ddd" stroke-width="2" fill="none"/>
<rect x="226" y="601" width="33" height="25" fill="#a0a0a0" stroke="#bbb"/><path d="M240,610v8M243,610v8M246,610v8" stroke="#888"/>
<rect x="1148" y="601" width="13" height="25" fill="#a0a0a0" stroke="#bbb"/><path d="M1153,607l4,6l-4,6" stroke="#ddd" stroke-width="2" fill="none"/>
<rect x="1163" y="135" width="6" height="491" fill="#494954"/><path d="M1166,360v40" stroke="#707078" stroke-width="4" stroke-dasharray="1 1"/>
<!-- regions -->
<rect x="1169" y="135" width="91" height="491" fill="#000"/>
<svg x="1169" y="135" width="91" height="300"><g font-size="14" fill="#0a8fd8" stroke="#0a8fd8" stroke-width=".35"><text x="20" y="12">Basse-3</text><text x="20" y="35">Batterie-1</text><text x="20" y="58">Basse-4</text><text x="20" y="81">Basse-1</text><text x="20" y="104">Basse-2</text><text x="20" y="127">batterie-1</text><text x="20" y="150">Audio 2-1</text><text x="20" y="173">Audio 3-1</text><text x="20" y="196">Audio 1-1</text><text x="20" y="219">Audio 3-2</text><text x="20" y="242">batterie-2</text></g></svg>
<path d="M1173,165l5,5l-5,5zM1173,188l5,5l-5,5zM1173,211l5,5l-5,5zM1173,234l5,5l-5,5zM1173,257l5,5l-5,5zM1173,280l5,5l-5,5zM1173,303l5,5l-5,5zM1173,326l5,5l-5,5zM1173,349l5,5l-5,5zM1173,372l5,5l-5,5z" fill="none" stroke="#c8c8c8"/>
<!-- side tabs -->
<rect x="1260" y="135" width="24" height="491" fill="#565663"/>
<path d="M1260,200h21l2,-2V135M1260,279h21l2,-2V200M1260,336h21l2,-2V280M1260,471h21l2,-2V336M1260,551h21l2,-2V471" fill="none" stroke="#6e6e7a"/>
<g font-size="14" fill="#c4c4c8">
<text transform="translate(1272,140) rotate(90)">Régions</text>
<text transform="translate(1272,206) rotate(90)">Pistes/bus</text>
<text transform="translate(1272,285) rotate(90)">Clichés</text>
<text transform="translate(1272,343) rotate(90)">Groupes d'édition</text>
<text transform="translate(1272,474) rotate(90)">Fragments</text>
</g>

<!-- ALSA window -->
<rect x="0" y="630" width="1275" height="387" fill="#000"/>
<rect x="0" y="632" width="1274" height="384" fill="#e9e9e9"/>
<path d="M6,640h7l-3.500,4z" fill="#777"/>
<text class="tb" x="20" y="640">Mixeur ALSA GNOME</text>
<g stroke="#777" fill="none"><path d="M1227,643h7" stroke-width="2"/><rect x="1245.500" y="637.500" width="6" height="6"/><path d="M1262,637l6,7M1268,637l-6,7" stroke-width="1.600"/></g>
<g font-size="11" fill="#222"><text x="10" y="659"><tspan text-decoration="underline">F</tspan>ichier</text><text x="60" y="659">É<tspan text-decoration="underline">d</tspan>ition</text><text x="112" y="659"><tspan text-decoration="underline">A</tspan>ide</text></g>
<rect x="0" y="669" width="1274" height="1" fill="#aaa"/>
<rect x="82" y="671" width="65" height="21" fill="#d2d2d2" stroke="#aaa"/><rect x="148" y="671" width="65" height="21" fill="#d2d2d2" stroke="#aaa"/>
<path d="M1,692H80V671H1ZM80,692H1272" fill="none" stroke="#aaa"/>
<rect x="1" y="691" width="79" height="3" fill="#e9e9e9"/>
<g font-size="11.200" fill="#222"><text x="6" y="680">VIA VT1708S</text><text x="85" y="681">USB Mixer</text><text x="151" y="681">USB Mixer</text></g>
<path d="M2.500,692V937M107.500,692V937M212.500,692V937M317.500,692V937M422.500,692V937M527.500,692V937M632.500,692V937M737.500,692V937M842.500,692V937M947.500,692V937M1052.500,692V937M1157.500,692V937M1272.500,692V937M2,938H1272M2,941H1272" stroke="#aaa" fill="none"/>
<!-- alsa vertical sliders -->
<g fill="#d2d2d2" stroke="#999">
<rect x="47" y="708" width="15" height="173"/><rect x="152" y="708" width="15" height="173"/><rect x="257" y="708" width="15" height="173"/><rect x="362" y="708" width="15" height="173"/><rect x="467" y="708" width="15" height="173"/><rect x="572" y="708" width="15" height="173"/><rect x="677" y="708" width="15" height="173"/><rect x="782" y="708" width="15" height="173"/><rect x="887" y="708" width="15" height="173"/><rect x="992" y="708" width="15" height="173"/><rect x="1097" y="708" width="15" height="173"/><rect x="1207" y="708" width="15" height="173"/>
</g>
<g fill="#ececec" stroke="#999">
<rect x="47" y="812" width="15" height="15"/><rect x="47" y="827" width="15" height="15"/>
<rect x="152" y="850" width="15" height="15"/><rect x="152" y="865" width="15" height="16"/>
<rect x="257" y="708" width="15" height="15"/><rect x="257" y="723" width="15" height="15"/>
<rect x="362" y="708" width="15" height="15"/><rect x="362" y="723" width="15" height="15"/>
<rect x="467" y="850" width="15" height="15"/><rect x="467" y="865" width="15" height="16"/>
<rect x="572" y="850" width="15" height="15"/><rect x="572" y="865" width="15" height="16"/>
<rect x="677" y="708" width="15" height="15"/><rect x="677" y="723" width="15" height="15"/>
<rect x="782" y="850" width="15" height="15"/><rect x="782" y="865" width="15" height="16"/>
<rect x="887" y="757" width="15" height="15"/><rect x="887" y="772" width="15" height="15"/>
<rect x="992" y="738" width="15" height="15"/><rect x="992" y="753" width="15" height="15"/>
<rect x="1097" y="708" width="15" height="15"/><rect x="1097" y="723" width="15" height="15"/>
<rect x="1207" y="850" width="15" height="15"/><rect x="1207" y="865" width="15" height="16"/>
</g>
<!-- alsa horizontal -->
<g fill="#d2d2d2" stroke="#999">
<rect x="5" y="885" width="99" height="15"/><rect x="110" y="885" width="99" height="15"/><rect x="215" y="885" width="99" height="15"/><rect x="320" y="885" width="99" height="15"/><rect x="425" y="885" width="99" height="15"/><rect x="530" y="885" width="99" height="15"/><rect x="635" y="885" width="99" height="15"/><rect x="740" y="885" width="99" height="15"/><rect x="845" y="885" width="99" height="15"/><rect x="950" y="885" width="99" height="15"/><rect x="1055" y="885" width="99" height="15"/><rect x="1160" y="885" width="108" height="15"/>
</g>
<g fill="#ececec" stroke="#999">
<rect x="39" y="885" width="15" height="15"/><rect x="54" y="885" width="15" height="15"/><rect x="144" y="885" width="15" height="15"/><rect x="159" y="885" width="15" height="15"/><rect x="249" y="885" width="15" height="15"/><rect x="264" y="885" width="15" height="15"/><rect x="354" y="885" width="15" height="15"/><rect x="369" y="885" width="15" height="15"/><rect x="459" y="885" width="15" height="15"/><rect x="474" y="885" width="15" height="15"/><rect x="564" y="885" width="15" height="15"/><rect x="579" y="885" width="15" height="15"/><rect x="669" y="885" width="15" height="15"/><rect x="684" y="885" width="15" height="15"/><rect x="774" y="885" width="15" height="15"/><rect x="789" y="885" width="15" height="15"/><rect x="879" y="885" width="15" height="15"/><rect x="894" y="885" width="15" height="15"/><rect x="984" y="885" width="15" height="15"/><rect x="999" y="885" width="15" height="15"/><rect x="1089" y="885" width="15" height="15"/><rect x="1104" y="885" width="15" height="15"/><rect x="1199" y="885" width="15" height="15"/><rect x="1214" y="885" width="15" height="15"/>
</g>
<g font-size="11.200" fill="#222" class="m">
<text x="55" y="699">Master F</text><text x="160" y="699">Headphon</text><text x="265" y="699">PCM</text><text x="370" y="699">Front</text><text x="475" y="699">Front Mi</text><text x="580" y="699">Front Mi</text><text x="685" y="699">Line</text><text x="790" y="699">Mic</text><text x="895" y="699">Mic Boos</text><text x="1000" y="699">Capture</text><text x="1105" y="699">Capture</text><text x="1215" y="699">Digital</text>
</g>
<g font-size="11.200" fill="#222">
<text x="21" y="910">Sourdine</text><text x="126" y="910">Sourdine</text><text x="336" y="910">Sourdine</text><text x="441" y="910">Sourdine</text><text x="651" y="910">Sourdine</text><text x="756" y="910">Sourdine</text>
<text x="966" y="928">Enreg.</text><text x="1071" y="928">Enreg.</text>
<text x="20" y="950">Independent HP</text><text x="20" y="968">Input Source</text><text x="20" y="986">Smart 5.1</text>
</g>
<g fill="#f4f4f4" stroke="#999">
<rect x="5" y="906" width="9" height="9"/><rect x="110" y="906" width="9" height="9"/><rect x="320" y="906" width="9" height="9"/><rect x="425" y="906" width="9" height="9"/><rect x="635" y="906" width="9" height="9"/><rect x="740" y="906" width="9" height="9"/><rect x="950" y="924" width="9" height="9"/><rect x="1055" y="924" width="9" height="9"/>
<rect x="4" y="946" width="9" height="9"/><rect x="4" y="964" width="9" height="9"/><rect x="4" y="982" width="9" height="9"/>
</g>
<g fill="#6f9fd8"><rect x="112" y="908" width="6" height="6"/><rect x="427" y="908" width="6" height="6"/><rect x="742" y="908" width="6" height="6"/><rect x="952" y="926" width="6" height="6"/><rect x="1057" y="926" width="6" height="6"/><rect x="6" y="966" width="6" height="6"/></g>
<rect x="0" y="996" width="1274" height="2" fill="#b0b0b0"/>
<path d="M1270,1000v1M1266,1005v1M1270,1005v1M1262,1010v1M1266,1010v1M1270,1010v1" stroke="#999" fill="none"/>
</svg>
</body></html>
